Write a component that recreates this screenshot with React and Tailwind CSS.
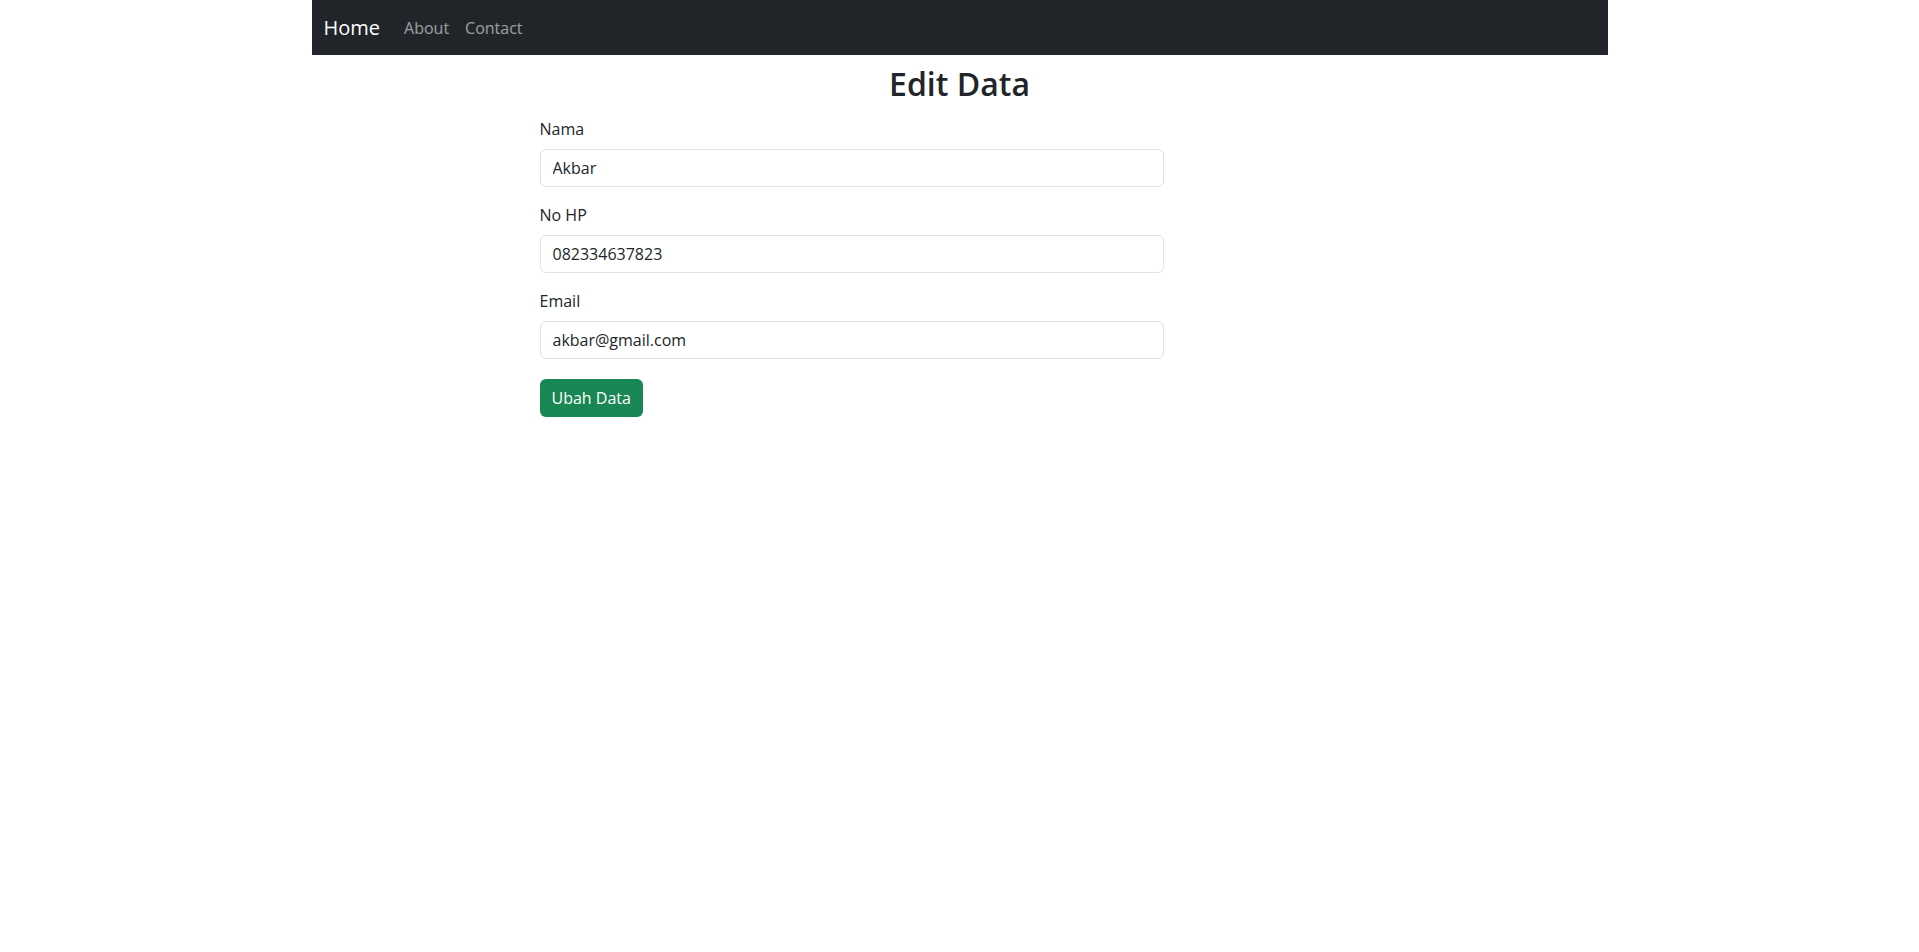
import React, { useState } from 'react';

const Field = ({ label, value, onChange, type = 'text' }) => (
  <div className="mb-4">
    <label className="mb-2 block text-base leading-6 text-[#212529]">{label}</label>
    <input
      type={type}
      value={value}
      onChange={(e) => onChange(e.target.value)}
      className="block h-[38px] w-full rounded-md border border-[#dee2e6] bg-white px-3 text-base text-[#212529] outline-none"
    />
  </div>
);

const App = () => {
  const [form, setForm] = useState({
    nama: 'Akbar',
    hp: '082334637823',
    email: 'akbar@gmail.com',
  });

  const update = (key) => (value) => setForm((prev) => ({ ...prev, [key]: value }));

  return (
    <div className="min-h-screen bg-white font-['Open_Sans',sans-serif] text-[#212529]">
      <div className="mx-auto max-w-[1320px] px-3">
        {/* Navbar */}
        <nav className="flex h-[55px] items-center bg-[#212529] px-3">
          <a href="#" className="mr-4 text-[20px] leading-[30px] text-white">Home</a>
          <div className="flex">
            <a href="#" className="px-2 text-base text-white/55">About</a>
            <a href="#" className="px-2 text-base text-white/55">Contact</a>
          </div>
        </nav>

        {/* Title */}
        <h2 className="mt-[10px] mb-[14px] text-center text-[32px] font-semibold leading-[38px]">Edit Data</h2>

        {/* Form */}
        <form className="ml-[228px] w-[624px]" onSubmit={(e) => e.preventDefault()}>
          <Field label="Nama" value={form.nama} onChange={update('nama')} />
          <Field label="No HP" value={form.hp} onChange={update('hp')} />
          <Field label="Email" value={form.email} onChange={update('email')} type="email" />
          <button
            type="submit"
            className="mt-1 h-[38px] rounded-md bg-[#198754] px-3 text-base text-white"
          >
            Ubah Data
          </button>
        </form>
      </div>
    </div>
  );
};

export default App;
